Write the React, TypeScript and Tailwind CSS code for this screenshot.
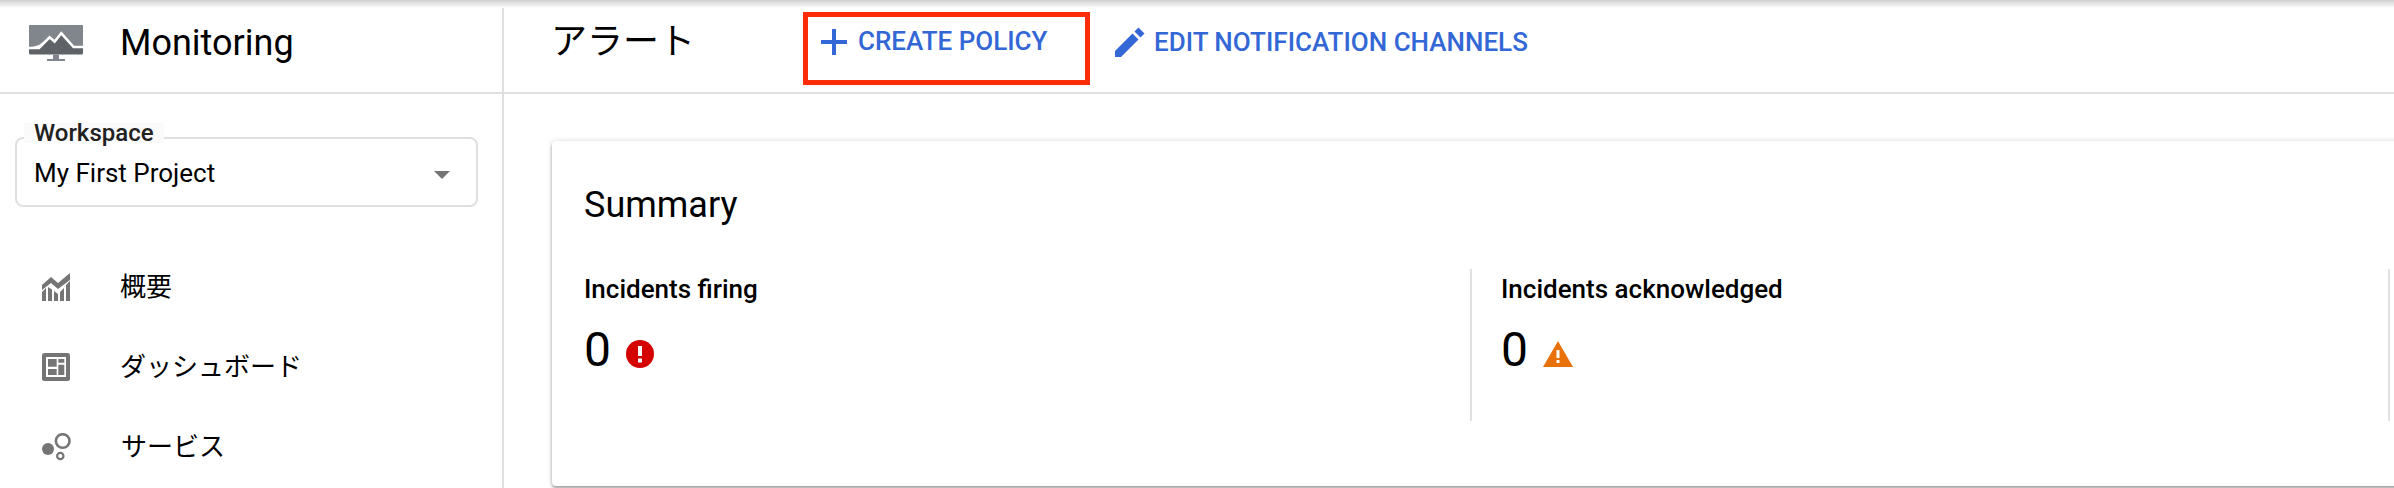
const font = "font-['Roboto','Noto_Sans_CJK_JP',sans-serif]";

const LogoIcon = () => (
  <svg width="54" height="36" viewBox="0 0 54 36" className="shrink-0">
    <path d="M1 0h52a1 1 0 0 1 1 1v22l-9.400-1.400L32.300 8.300l-6.700 8.300-5-4.300L10 20l-10 3V1a1 1 0 0 1 1-1z" fill="#80868b" />
    <path d="M0 23h10l10.600-10.700 5 4.300 6.700-8.300 12.300 13.300L54 23v5a1.500 1.500 0 0 1-1.500 1.500h-51A1.500 1.500 0 0 1 0 28z" fill="#5f6368" />
    <path d="M0 23h10l10.600-10.700 5 4.300 6.700-8.300L44.600 22H54" fill="none" stroke="#fff" strokeWidth="2.500" />
    <path d="M24 29.500h6V34h6v2H18v-2h6z" fill="#80868b" />
  </svg>
);

const ChartIcon = () => (
  <svg width="28" height="28" viewBox="0 0 28 28" className="shrink-0" fill="#757575">
    <path d="M0 28V19l4-4v13zM6 28V14l4 2.500V28zM12 28V18l4 3v7zM18 28V19l4-4v13zM24 28V12l4-4v20z" />
    <path d="M0 12l9-8 7 6L28 0v7L16 16l-7-6-9 7z" />
  </svg>
);

const DashboardIcon = () => (
  <svg width="28" height="28" viewBox="0 0 28 28" className="shrink-0">
    <rect width="28" height="28" rx="2.500" fill="#757575" />
    <rect x="4" y="4" width="20" height="20" fill="#fff" />
    <path d="M6 6h8.700v7.700H6zM6 16h8.700v6H6zM16.300 6h6v3.700h-6zM16.300 11.700h6V22h-6z" fill="#757575" />
  </svg>
);

const ServicesIcon = () => (
  <svg width="29" height="28" viewBox="0 0 29 28" className="shrink-0" fill="none" stroke="#757575">
    <circle cx="6" cy="16" r="6" fill="#757575" stroke="none" />
    <circle cx="20.700" cy="8" r="6.800" strokeWidth="2.600" />
    <circle cx="18.300" cy="23" r="3.200" strokeWidth="2.200" />
  </svg>
);

const navItems = [
  { label: "概要", icon: <ChartIcon /> },
  { label: "ダッシュボード", icon: <DashboardIcon /> },
  { label: "サービス", icon: <ServicesIcon /> },
];

const App = () => {
  return (
    <div className={`relative flex h-[488px] w-[2394px] flex-col overflow-hidden bg-white text-black ${font}`}>
      {/* sombra de la barra superior */}
      <div className="absolute inset-x-0 top-0 h-[8px] bg-gradient-to-b from-[#d0d0d0] to-white" />

      <header className="flex h-[94px] shrink-0 border-b-2 border-[#e0e0e0]">
        <div className="flex w-[504px] shrink-0 items-center border-r-2 border-[#e0e0e0] pb-[6px] pl-[29px]">
          <LogoIcon />
          <span className="ml-[37px] text-[36px] leading-none">Monitoring</span>
        </div>
        <div className="flex items-center pl-[47px]">
          <h1 className="w-[252px] pb-[8px] text-[36px] leading-none">アラート</h1>
          <button className="mt-[5px] flex h-[73px] w-[287px] items-center border-[5px] border-[#fb2c07] pb-[14px] pl-[13px] text-[26px] font-medium text-[#3367d6]">
            <svg width="26" height="26" viewBox="0 0 26 26" fill="#3367d6" className="shrink-0">
              <path d="M11 0h4v11h11v4H15v11h-4V15H0v-4h11z" />
            </svg>
            <span className="ml-[11px]">CREATE POLICY</span>
          </button>
          <button className="ml-[25px] flex items-center pb-[8px] text-[26px] font-medium text-[#3367d6]">
            <svg width="30" height="30" viewBox="0 0 30 30" fill="#3367d6" className="shrink-0">
              <path d="M0 24v6h6L23.500 12.500l-6-6zM29.500 6.500 23.500.5l-4 4 6 6z" />
            </svg>
            <span className="ml-[9px]">EDIT NOTIFICATION CHANNELS</span>
          </button>
        </div>
      </header>

      <div className="flex min-h-0 flex-1">
        <aside className="w-[504px] shrink-0 border-r-2 border-[#e0e0e0] pl-[15px] pr-[24px] pt-[43px]">
          <div className="relative flex h-[70px] items-end justify-between rounded-[8px] border-2 border-[#e0e0e0] pl-[17px] pr-[26px] pb-[17px]">
            <span className="absolute left-[7px] top-[-16px] bg-[#fafafa] px-[10px] text-[24px] font-medium leading-[20px] text-[#212121]">
              Workspace
            </span>
            <span className="text-[26px] leading-[30px]">My First Project</span>
            <span className="mb-[9px] h-0 w-0 border-x-[8px] border-t-[8px] border-x-transparent border-t-[#757575]" />
          </div>
          <nav className="mt-[66px] flex flex-col gap-[52px] pl-[27px]">
            {navItems.map((item) => (
              <div key={item.label} className="flex h-[28px] items-center">
                {item.icon}
                <span className="ml-[50px] text-[26px] leading-none">{item.label}</span>
              </div>
            ))}
          </nav>
        </aside>

        <main className="min-w-0 flex-1 pl-[48px] pt-[47px]">
          <section className="h-[345px] w-[1900px] rounded-[4px] bg-white pl-[32px] pt-[44px] shadow-[0_2px_3px_rgba(0,0,0,0.35),0_0_6px_rgba(0,0,0,0.12)]">
            <h2 className="text-[36px] leading-[40px]">Summary</h2>
            <div className="mt-[44px] flex h-[152px]">
              <div className="w-[888px] shrink-0 border-r-2 border-[#e0e0e0]">
                <p className="pt-[5px] text-[26px] font-medium leading-[30px]">Incidents firing</p>
                <div className="mt-[18px] flex items-center">
                  <span className="text-[48px] leading-[56px]">0</span>
                  <svg width="28" height="28" viewBox="0 0 28 28" className="ml-[15px] mt-[8px]">
                    <circle cx="14" cy="14" r="14" fill="#d50000" />
                    <path d="M12 6h4v10h-4zM12 18.500h4v4h-4z" fill="#fff" />
                  </svg>
                </div>
              </div>
              <div className="w-[918px] shrink-0 border-r-2 border-[#e0e0e0] pl-[29px]">
                <p className="pt-[5px] text-[26px] font-medium leading-[30px]">Incidents acknowledged</p>
                <div className="mt-[18px] flex items-center">
                  <span className="text-[48px] leading-[56px]">0</span>
                  <svg width="30" height="26" viewBox="0 0 30 26" className="ml-[15px] mt-[8px]">
                    <path d="M15 0l15 26H0z" fill="#e8710a" />
                    <path d="M13.500 9h3v8h-3zM13.500 19h3v3h-3z" fill="#fff" />
                  </svg>
                </div>
              </div>
            </div>
          </section>
        </main>
      </div>
    </div>
  );
};

export default App;
